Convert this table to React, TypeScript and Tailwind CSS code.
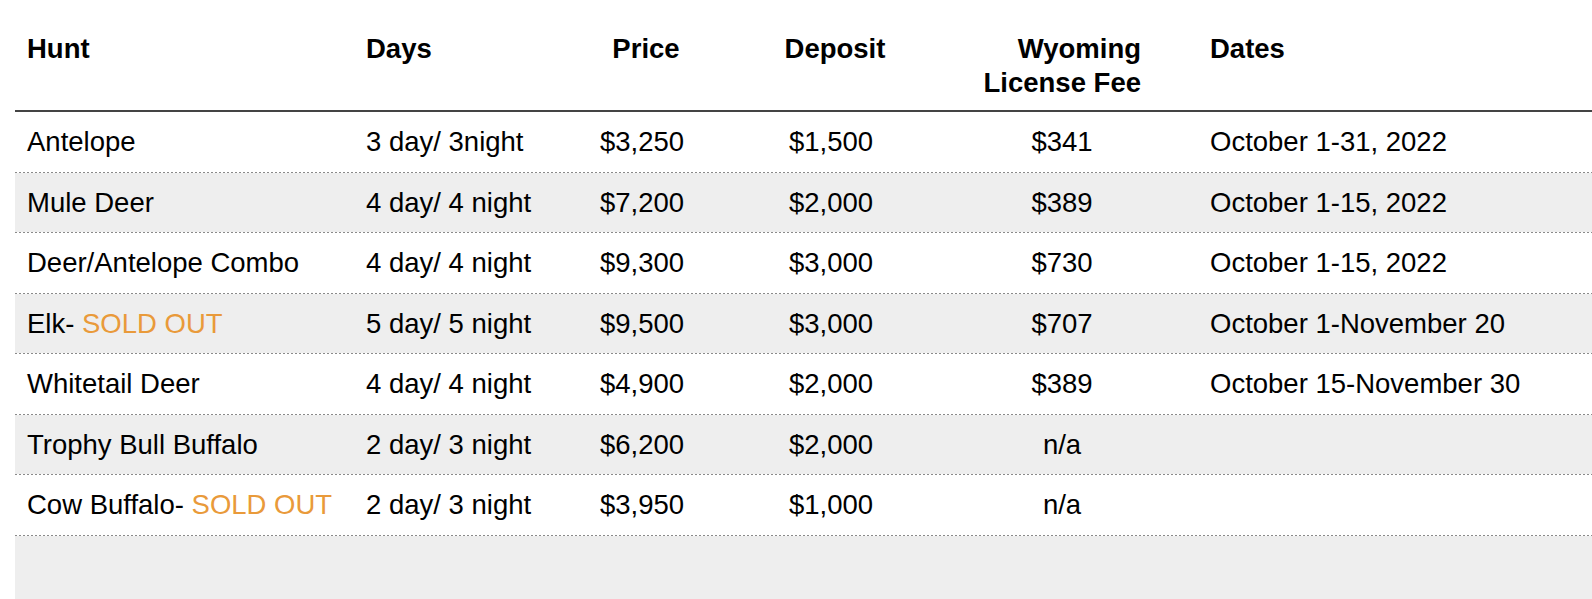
const hunts = [
  { name: "Antelope", days: "3 day/ 3night", price: "$3,250", deposit: "$1,500", fee: "$341", dates: "October 1-31, 2022" },
  { name: "Mule Deer", days: "4 day/ 4 night", price: "$7,200", deposit: "$2,000", fee: "$389", dates: "October 1-15, 2022" },
  { name: "Deer/Antelope Combo", days: "4 day/ 4 night", price: "$9,300", deposit: "$3,000", fee: "$730", dates: "October 1-15, 2022" },
  { name: "Elk- ", soldOut: true, days: "5 day/ 5 night", price: "$9,500", deposit: "$3,000", fee: "$707", dates: "October 1-November 20" },
  { name: "Whitetail Deer", days: "4 day/ 4 night", price: "$4,900", deposit: "$2,000", fee: "$389", dates: "October 15-November 30" },
  { name: "Trophy Bull Buffalo", days: "2 day/ 3 night", price: "$6,200", deposit: "$2,000", fee: "n/a", dates: "" },
  { name: "Cow Buffalo- ", soldOut: true, days: "2 day/ 3 night", price: "$3,950", deposit: "$1,000", fee: "n/a", dates: "" },
];

const Divider = () => (
  <div className="h-px w-full bg-[repeating-linear-gradient(to_right,#8a8a8a_0_2px,transparent_2px_4px)]" />
);

export default function App() {
  return (
    <div className="min-h-screen w-full overflow-hidden bg-white pl-[15px] pt-[22px] font-['Liberation_Sans',Arial,Helvetica,sans-serif] text-[27.5px] text-black">
      {/* Header */}
      <div className="flex items-start border-b-2 border-[#444] py-[10px] font-bold leading-[34px]">
        <div className="w-[339px] shrink-0 pl-3">Hunt</div>
        <div className="w-[192px] shrink-0 pl-3">Days</div>
        <div className="w-[200px] shrink-0 text-center">Price</div>
        <div className="w-[178px] shrink-0 text-center">Deposit</div>
        <div className="w-[276px] shrink-0 pr-[59px] text-right">
          Wyoming
          <br />
          License Fee
        </div>
        <div className="flex-1 pl-[10px]">Dates</div>
      </div>

      {/* Rows */}
      {hunts.map((h, i) => (
        <div key={h.name}>
          <div className={`flex items-center py-[13px] leading-[33.5px] ${i % 2 === 1 ? "bg-[#eeeeee]" : "bg-white"}`}>
            <div className="w-[339px] shrink-0 whitespace-nowrap pl-3">
              {h.name}
              {h.soldOut && <span className="text-[#e99a3a]">SOLD OUT</span>}
            </div>
            <div className="w-[192px] shrink-0 whitespace-nowrap pl-3">{h.days}</div>
            <div className="w-[200px] shrink-0 pr-2 text-center">{h.price}</div>
            <div className="w-[178px] shrink-0 pr-2 text-center">{h.deposit}</div>
            <div className="w-[276px] shrink-0 text-center">{h.fee}</div>
            <div className="flex-1 whitespace-nowrap pl-[10px]">{h.dates || "\u00a0"}</div>
          </div>
          <Divider />
        </div>
      ))}

      {/* Trailing empty row */}
      <div className="h-[90px] bg-[#eeeeee]" />
    </div>
  );
}
